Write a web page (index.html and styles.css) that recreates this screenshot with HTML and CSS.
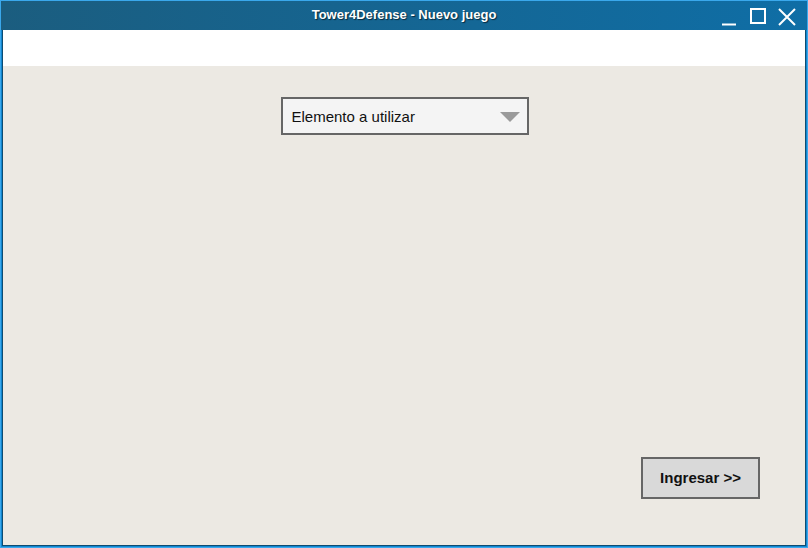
FILE: index.html
```html
<!DOCTYPE html>
<html lang="es">
<head>
<meta charset="utf-8">
<title>Tower4Defense - Nuevo juego</title>
<link rel="stylesheet" href="styles.css">
</head>
<body>
<div class="window">
  <div class="titlebar">
    <div class="title">Tower4Defense - Nuevo juego</div>
    <div class="controls">
      <svg class="ctl" width="18" height="18" viewBox="0 0 18 18"><path d="M2 15.5 H16" stroke="#fff" stroke-width="2" fill="none"/></svg>
      <svg class="ctl" width="18" height="18" viewBox="0 0 18 18"><rect x="2" y="1" width="14" height="14" stroke="#fff" stroke-width="2" fill="none"/></svg>
      <svg class="ctl" width="20" height="20" viewBox="0 0 20 20"><path d="M2 2 L18 18 M18 2 L2 18" stroke="#fff" stroke-width="2" fill="none"/></svg>
    </div>
  </div>
  <div class="frame">
    <div class="client">
      <div class="menubar"></div>
      <div class="content">
        <div class="combo">
          <span class="combo-text">Elemento a utilizar</span>
          <svg class="arrow" width="20" height="10" viewBox="0 0 20 10"><path d="M0 0 H20 L10 10 Z" fill="#9a9a9a"/></svg>
        </div>
        <div class="spacer"></div>
        <div class="actions">
          <button class="btn">Ingresar &gt;&gt;</button>
        </div>
      </div>
    </div>
  </div>
</div>
</body>
</html>
```
FILE: styles.css
```css
html, body {
  margin: 0;
  padding: 0;
}
body {
  width: 808px;
  height: 548px;
  overflow: hidden;
  font-family: "Liberation Sans", Arial, sans-serif;
}
.window {
  box-sizing: border-box;
  width: 808px;
  height: 548px;
  border: 1px solid #3aa8ec;
  display: flex;
  flex-direction: column;
}
.titlebar {
  height: 29px;
  flex: 0 0 29px;
  background: linear-gradient(to right, #1b5d7f, #0f6ea6);
  position: relative;
  display: flex;
  align-items: center;
  justify-content: center;
}
.title {
  color: #fff;
  font-weight: bold;
  font-size: 13px;
  text-shadow: 1px 1px 1px rgba(0,0,0,0.6);
  margin-top: -2px;
}
.controls {
  position: absolute;
  right: 10px;
  top: 5px;
  display: flex;
  gap: 10px;
  align-items: flex-start;
}
.ctl { display: block; }
.controls .ctl:nth-child(1) { margin-top: 3px; margin-right: 1px; }
.controls .ctl:nth-child(2) { margin-top: 2px; }
.controls .ctl:nth-child(3) { margin-top: 1px; }
.frame {
  flex: 1;
  display: flex;
  border: 1px solid #1286cf;
  border-top: none;
}
.client {
  flex: 1;
  display: flex;
  flex-direction: column;
  border: 1px solid #0d4c72;
  border-top: none;
  background: #ece9e3;
}
.menubar {
  height: 36px;
  flex: 0 0 36px;
  background: #fff;
}
.content {
  flex: 1;
  display: flex;
  flex-direction: column;
  align-items: center;
  padding: 31px 45px 46px 45px;
}
.combo {
  box-sizing: border-box;
  width: 248px;
  height: 38px;
  border: 2px solid #666;
  background: #f4f4f4;
  display: flex;
  align-items: center;
  justify-content: space-between;
  padding: 0 7px 0 9px;
  margin-left: 1px;
}
.combo-text {
  font-size: 15px;
  color: #111;
}
.arrow {
  display: block;
  margin-top: 1px;
}
.spacer { flex: 1; }
.actions {
  align-self: stretch;
  display: flex;
  justify-content: flex-end;
}
.btn {
  box-sizing: border-box;
  width: 119px;
  height: 42px;
  border: 2px solid #666;
  background: #d9d9d9;
  font-family: "Liberation Sans", Arial, sans-serif;
  font-weight: bold;
  font-size: 15px;
  color: #111;
  padding: 0 0 2px 0;
  margin: 0;
}
```
